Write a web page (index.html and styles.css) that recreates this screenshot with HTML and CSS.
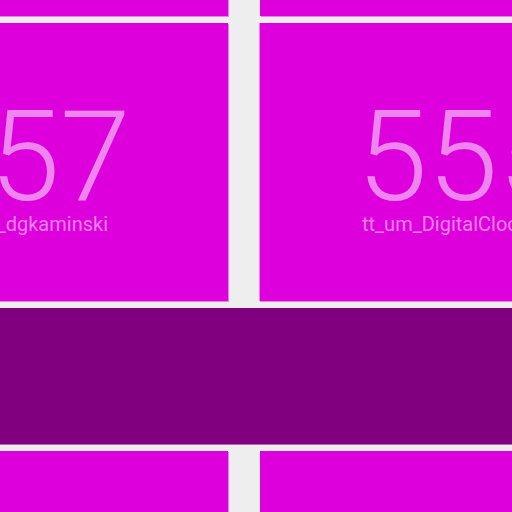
FILE: index.html
```html
<!DOCTYPE html>
<html>
<head>
<meta charset="utf-8">
<link rel="stylesheet" href="styles.css">
</head>
<body>
<div class="board">
  <div class="tile"></div>
  <div class="tile"></div>
  <div class="tile tile--left">
    <div class="stat">
      <div class="count">557</div>
      <div class="name">tt_um_dgkaminski</div>
    </div>
  </div>
  <div class="tile tile--right">
    <div class="stat">
      <div class="count">555</div>
      <div class="name">tt_um_DigitalClock</div>
    </div>
  </div>
  <div class="band"></div>
  <div class="tile"></div>
  <div class="tile"></div>
</div>
</body>
</html>
```

FILE: styles.css
```css
html, body {
  margin: 0;
  padding: 0;
  background: #eeeeee;
  overflow: hidden;
  width: 512px;
  height: 512px;
}

.board {
  display: grid;
  grid-template-columns: 370px 370px;
  grid-template-rows: 277px 278px 136px 278px;
  column-gap: 32px;
  row-gap: 7px;
  margin-left: -142px;
  margin-top: -261px;
  width: 772px;
}

.tile {
  background: #dd00dd;
  box-shadow: 1px 1px 0 0 #eb80eb;
  font-family: Roboto, "Noto Sans", sans-serif;
  color: rgba(255, 255, 255, 0.52);
  white-space: nowrap;
  overflow: hidden;
}

.tile--right {
  box-shadow: -1px 0 0 0 #eb80eb, 0 1px 0 0 #eb80eb;
}

.stat {
  display: flex;
  flex-direction: column;
  padding-top: 70px;
}

.count {
  font-size: 127px;
  font-weight: 300;
  line-height: 1;
}

.name {
  font-size: 20px;
  font-weight: 400;
  line-height: 24px;
  margin-top: -8px;
}

.tile--left .count { margin-left: 61px; }
.tile--left .name { margin-left: 88px; }
.tile--right .count { margin-left: 97px; }
.tile--right .name { margin-left: 102px; }

.band {
  grid-column: 1 / span 2;
  background: #800080;
  box-shadow: 0 1px 0 0 #b766b7;
}
```
